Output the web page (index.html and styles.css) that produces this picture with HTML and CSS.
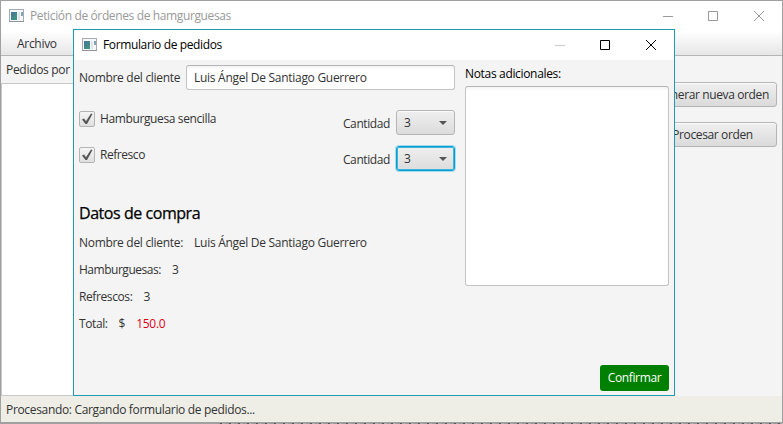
FILE: index.html
```html
<!DOCTYPE html>
<html lang="es">
<head>
<meta charset="utf-8">
<title>Petición de órdenes de hamgurguesas</title>
<link rel="stylesheet" href="styles.css">
</head>
<body>
<svg class="defs" width="0" height="0">
  <defs>
    <linearGradient id="pane" x1="0" y1="0" x2="1" y2="1"><stop offset="0" stop-color="#4a72a0"/><stop offset="1" stop-color="#3f9b78"/></linearGradient>
    <symbol id="app" viewBox="0 0 16 14">
      <rect x=".5" y=".5" width="14" height="12" fill="#f5f7f8" stroke="#a5abb0"/>
      <rect x="2" y="3" width="6" height="8" fill="url(#pane)"/>
      <rect x="9" y="3" width="2" height="8" fill="#dfe5e9"/>
      <rect x="12" y="3" width="2" height="4" fill="#7fa5b5"/>
      <path d="M0 12.500H15" stroke="#8e9499"/>
    </symbol>
    <symbol id="controls" viewBox="0 0 102 12">
      <path class="min" d="M0 6.500H10"/>
      <path d="M45.500 1.500H54.500V10.500H45.500Z M91 1L101 11M101 1L91 11"/>
    </symbol>
  </defs>
</svg>
<div class="window">
  <header class="titlebar inactive">
    <svg class="app" width="16" height="14"><use href="#app"/></svg>
    <span class="caption main-caption">Petición de órdenes de hamgurguesas</span>
    <svg class="controls" width="102" height="12"><use href="#controls"/></svg>
  </header>
  <nav class="menubar"><span class="archivo">Archivo</span></nav>
  <main class="body">
    <section class="orders"><div class="orders-label">Pedidos por</div><div class="list"></div></section>
    <aside class="actions">
      <button class="fx generar"><span>Generar nueva orden</span></button>
      <button class="fx procesar"><span>Procesar orden</span></button>
    </aside>
  </main>
  <footer class="status"><span>Procesando: Cargando formulario de pedidos...</span></footer>
</div>
<div class="desktop-edge"></div>

<div class="dialog">
  <header class="titlebar">
    <svg class="app" width="16" height="14"><use href="#app"/></svg>
    <span class="caption dialog-caption">Formulario de pedidos</span>
    <svg class="controls nomin" width="102" height="12"><use href="#controls"/></svg>
  </header>
  <div class="form">
    <section class="left">
      <div class="row name"><span class="client">Nombre del cliente</span><div class="input"><span class="person">Luis Ángel De Santiago Guerrero</span></div></div>
      <div class="row item">
        <i class="check"><svg width="14" height="14"><path d="M2 7.500L4 6.500L6 9.300L11 1.500L12.500 2L7 12H5.500Z"/></svg></i>
        <span class="sencilla">Hamburguesa sencilla</span><span class="cantidad">Cantidad</span>
        <div class="combo"><span>3</span><i class="arrow"></i></div>
      </div>
      <div class="row item">
        <i class="check"><svg width="14" height="14"><path d="M2 7.500L4 6.500L6 9.300L11 1.500L12.500 2L7 12H5.500Z"/></svg></i>
        <span class="refresco">Refresco</span><span class="cantidad">Cantidad</span>
        <div class="combo focus"><span>3</span><i class="arrow"></i></div>
      </div>
      <h2><span>Datos de compra</span></h2>
      <div class="row data"><span class="client2">Nombre del cliente:</span><span class="person">Luis Ángel De Santiago Guerrero</span></div>
      <div class="row data"><span class="hamb">Hamburguesas:</span><span class="three">3</span></div>
      <div class="row data"><span class="refr">Refrescos:</span><span class="three">3</span></div>
      <div class="row data"><span class="total">Total:</span><span class="dollar">$</span><span class="amount">150.0</span></div>
    </section>
    <section class="right">
      <div class="notes-label"><span>Notas adicionales:</span></div>
      <div class="textarea"></div>
      <button class="confirm"><span>Confirmar</span></button>
    </section>
  </div>
</div>
</body>
</html>
```
FILE: styles.css
```css
* { box-sizing: border-box; }
body { margin: 0; width: 783px; height: 424px; overflow: hidden; position: relative; background: #9c9c9c; color: #333; font: 12px/16px "Open Sans", "Noto Sans", sans-serif; letter-spacing: -0.3px; }
span { white-space: nowrap; }
button { font: inherit; letter-spacing: inherit; color: inherit; padding: 0; }
.defs { position: absolute; }
.window { width: 783px; height: 423px; border: 1px solid #a0a0a0; background: #f4f4f4; display: flex; flex-direction: column; }
.titlebar { height: 30px; background: #fff; display: flex; align-items: center; padding: 0 17px 0 8px; color: #000; flex: none; }
.app { margin-right: 5px; flex: none; }
.main-caption { letter-spacing: -0.37px; }
.dialog-caption { letter-spacing: -0.37px; }
.controls { margin-left: auto; fill: none; stroke: #000; stroke-width: 1; }
.inactive { color: #999; }
.inactive .controls { stroke: #999; }
.nomin { --min: #ccc; }
.min { stroke: var(--min, currentColor); }
.menubar { height: 25px; flex: none; border-bottom: 1px solid #b5b5b5; background: linear-gradient(#fff, #e6e6e6); padding: 5px 16px; }
.body { flex: 1; display: flex; justify-content: space-between; min-height: 0; }
.orders { width: 110px; display: flex; flex-direction: column; }
.orders-label { height: 27px; padding: 6px 5px; }
.list { flex: 1; background: #fff; border: 1px solid #c8c8c8; }
.actions { width: 128px; margin: 26px 5px 0 0; display: flex; flex-direction: column; gap: 15px; letter-spacing: -0.38px; }
.fx { height: 25px; border: 1px solid #b5b5b5; border-radius: 3px; background: linear-gradient(#f0f0f0, #dadada); box-shadow: inset 0 1px #fbfbfb; }
.generar { padding-right: 1px; }
.procesar { padding-right: 1px; }
.status { height: 26px; flex: none; background: #eeeee6; padding: 6px 5px 4px; letter-spacing: -0.33px; }
.desktop-edge { height: 1px; background: linear-gradient(90deg, #a0a0a0 218px, transparent 218px), repeating-linear-gradient(90deg, #999 0 4px, #555 4px 6px, #aaa 6px 9px); }
.dialog { position: absolute; left: 73px; top: 29px; width: 602px; height: 367px; border: 1px solid #1f9cb5; background: #f4f4f4; }
.form { display: flex; gap: 10px; padding: 5px; height: 335px; }
.left { width: 376px; flex: none; }
.right { flex: 1; display: flex; flex-direction: column; }
.row { display: flex; align-items: center; }
.name { height: 25px; margin-bottom: 20px; justify-content: space-between; }
.input { width: 269px; height: 25px; border: 1px solid #c4c4c4; border-top-color: #b5b5b5; border-radius: 3px; padding: 4px 7px; background: linear-gradient(#f3f3f3, #fff 4px); }
.person { letter-spacing: -0.28px; }
.item { height: 25px; margin-bottom: 11px; }
.check { width: 16px; height: 16px; border: 1px solid #b4b4b4; border-radius: 2px; background: linear-gradient(#f6f6f6, #dfdfdf); margin: -8px 5px 0 0; }
.check svg { display: block; }
.check path { fill: #555; }
.sencilla, .refresco { margin-top: -8px; letter-spacing: -0.38px; }
.refresco { letter-spacing: -0.45px; }
.cantidad { margin-left: auto; padding-top: 3px; letter-spacing: -0.4px; }
.combo { width: 59px; height: 25px; margin-left: 6px; border: 1px solid #b5b5b5; border-radius: 3px; background: linear-gradient(#efefef, #dcdcdc); box-shadow: inset 0 1px #fafafa; display: flex; align-items: center; justify-content: space-between; padding: 0 7px; }
.focus { border-color: #039ed3; box-shadow: 0 0 0 1px #a6dced, inset 0 0 0 1px #42b5dd; }
.arrow { border: 4px solid transparent; border-top-color: #555; border-bottom: 0; }
h2 { margin: 31px 0 10px; height: 23px; font-size: 16px; line-height: 22px; font-weight: 400; letter-spacing: -0.45px; color: #000; -webkit-text-stroke: .25px #000; }
.data { height: 16px; margin-bottom: 11px; gap: 11px; }
.hamb { letter-spacing: -0.48px; }
.refr { letter-spacing: -0.4px; }
.total { letter-spacing: -0.4px; }
.amount { color: #e00018; letter-spacing: -0.25px; }
.notes-label { height: 21px; padding-top: 1px; color: #000; letter-spacing: -0.33px; }
.textarea { height: 200px; border: 1px solid #c4c4c4; border-top-color: #b5b5b5; border-radius: 3px; background: linear-gradient(#f3f3f3, #fff 4px); }
.confirm { width: 69px; height: 26px; margin: auto 0 -1px auto; border: 0; border-radius: 3px; background: #008000; color: #fff; letter-spacing: -0.36px; }
```
